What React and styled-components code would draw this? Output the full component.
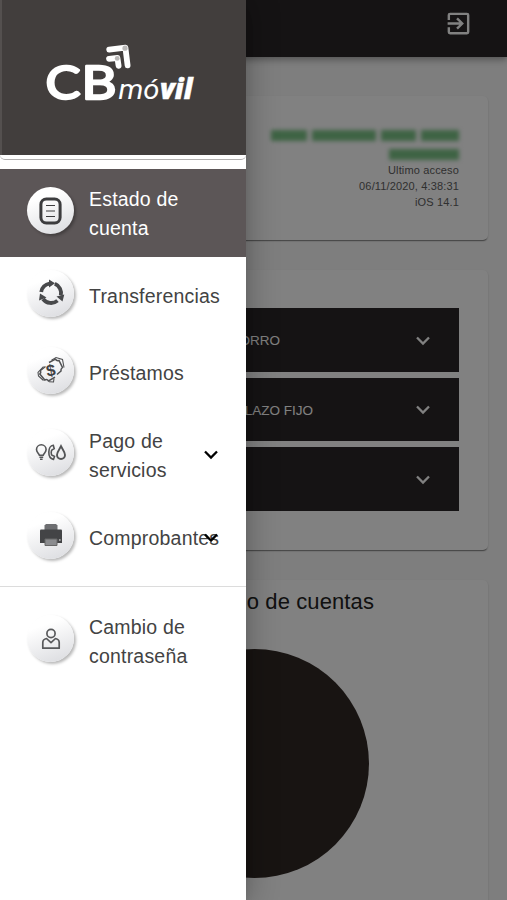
import React from "react";
import styled, { createGlobalStyle } from "styled-components";

const GlobalStyle = createGlobalStyle`
    * {
        box-sizing: border-box;
    }

    body {
        margin: 0;
        background: #fafafa;
        font-family: "Liberation Sans", Arial, sans-serif;
        overflow: hidden;
    }
`;

const Screen = styled.div`
    position: relative;
    height: 900px;
    overflow: hidden;
    background: #fafafa;
`;

const AppBar = styled.header`
    display: flex;
    align-items: center;
    justify-content: flex-end;
    height: 57px;
    padding: 0 34px 11px 0;
    background: #2b2728;
    box-shadow: 0 2px 5px rgba(0, 0, 0, .2), 0 5px 7px rgba(0, 0, 0, .14);
`;

const Page = styled.main`
    display: flex;
    flex-direction: column;
    gap: 30px;
    padding: 39px 19px 0;
`;

const Card = styled.section`
    height: ${props => props.$height}px;
    padding: ${props => props.$padding || "38.4px 29px"};
    border-radius: 5px;
    background: #fff;
    box-shadow: 0 2px 1px -1px rgba(0, 0, 0, .35), 0 1px 2px rgba(0, 0, 0, .2);
`;

const Owner = styled.div`
    display: flex;
    justify-content: flex-end;
    gap: 5px;
    height: 11px;
    margin-top: ${props => (props.$second ? 8 : 0)}px;
    filter: blur(2px);
`;

const Redacted = styled.span`
    width: ${props => props.$width}px;
    background: #7cc487;
`;

const Access = styled.div`
    padding-top: 2px;
    color: #606060;
    font-size: 11px;
    letter-spacing: .15px;
    line-height: 16px;
    text-align: right;
`;

const Accordions = styled.div`
    display: flex;
    flex-direction: column;
    gap: 6px;
`;

const Accordion = styled.div`
    display: flex;
    align-items: center;
    justify-content: space-between;
    height: 63.5px;
    padding: 1px 29px 0 0;
    background: #2b2728;
    color: #fff;
    font-size: 13.5px;
`;

const AccordionLabel = styled.span`
    width: ${props => props.$width}px;
    text-align: right;
    white-space: nowrap;
`;

const ChartTitle = styled.h2`
    width: 326px;
    margin: 0;
    font-size: 22px;
    font-weight: 400;
    line-height: 26px;
    letter-spacing: .1px;
    text-align: right;
    color: #222;
`;

const Pie = styled.div`
    width: 229px;
    height: 229px;
    margin: 34px 0 0 92px;
    border-radius: 50%;
    background: #312925;
`;

const Backdrop = styled.div`
    position: absolute;
    inset: 0;
    background: rgba(0, 0, 0, .495);
`;

const Drawer = styled.aside`
    position: absolute;
    top: 0;
    bottom: 0;
    left: 0;
    width: 245.5px;
    background: #fff;
    box-shadow: 0 10px 12px -6px rgba(0, 0, 0, .2), 0 0 29px 2px rgba(0, 0, 0, .28);
`;

const Brand = styled.div`
    height: 160px;
    border-bottom: 1.5px solid #b0aeae;
    border-radius: 0 0 5px 5px;
    overflow: hidden;
`;

const BrandPanel = styled.div`
    height: 155px;
    border-left: 2px solid #54504f;
    background: #423e3d;
`;

const Menu = styled.nav`
    padding-top: 9px;
`;

const Item = styled.a`
    display: flex;
    align-items: center;
    height: ${props => (props.$tall ? 88 : 77)}px;
    padding: 2px 27px 0;
    background: ${props => (props.$active ? "#5c5657" : "transparent")};
    color: ${props => (props.$active ? "#fff" : "#434343")};
    font-size: 19.5px;
    letter-spacing: .2px;
    line-height: 29.4px;
`;

const Badge = styled.span`
    display: flex;
    flex: none;
    align-items: center;
    justify-content: center;
    width: 47px;
    height: 47px;
    margin: 0 15px 7px 0;
    border-radius: 50%;
    background: linear-gradient(160deg, #fff 25%, #d9dade 100%);
    box-shadow: 2px 2px 3px rgba(0, 0, 0, .28);
`;

const ItemText = styled.span`
    flex: none;
    width: ${props => (props.$tall ? 104 : 115)}px;
`;

const ItemArrow = styled.span`
    display: flex;
    flex: none;
    margin: 0 0 2px ${props => (props.$tall ? 11 : 0)}px;
`;

const Divider = styled.hr`
    height: 1px;
    margin: 10px 0;
    border: 0;
    background: #dcdcdc;
`;

const Chevron = ({ color }) => (
    <svg width="14" height="10" viewBox="0 0 14 10" fill="none" stroke={color} strokeWidth="2.3">
        <path d="M1 1.5 7 7.5 13 1.5" />
    </svg>
);

const ExitIcon = () => (
    <svg width="29" height="29" viewBox="0 0 24 24" fill="#fff">
        <path d="M10.09 15.59 11.5 17l5-5-5-5-1.41 1.41L12.67 11H3v2h9.67l-2.58 2.59zM19 3H5a2 2 0 0 0-2 2v4h2V5h14v14H5v-4H3v4a2 2 0 0 0 2 2h14a2 2 0 0 0 2-2V5a2 2 0 0 0-2-2z" />
    </svg>
);

const Logo = () => (
    <svg width="243" height="155" viewBox="2 0 243 155">
        <g fill="#fff">
            <g fontFamily="Lato, sans-serif" fontSize="47" fontWeight="400" stroke="#fff" strokeWidth="2.4" strokeLinejoin="round">
                <text x="45.5" y="98.8" textLength="35" lengthAdjust="spacingAndGlyphs">C</text>
                <text x="81.5" y="98.8" textLength="35" lengthAdjust="spacingAndGlyphs">B</text>
            </g>
            <text x="118.5" y="98.5" fontFamily="Roboto, sans-serif" fontStyle="italic" fontSize="27" textLength="41" lengthAdjust="spacingAndGlyphs">mó</text>
            <text x="160" y="98.5" fontFamily="Open Sans, sans-serif" fontStyle="italic" fontWeight="800" fontSize="29" stroke="#fff" strokeWidth=".5" textLength="32.5" lengthAdjust="spacingAndGlyphs">vil</text>
        </g>
        <g fill="none" stroke="#fff" strokeWidth="5.8" strokeLinecap="round" strokeLinejoin="round">
            <path d="M109.2 49.6 125.4 47.6 127.6 65.3" />
            <path d="M109 58.8 117.4 58 118.6 65.8" />
        </g>
        <circle cx="125" cy="48.2" r="2.6" fill="#bbb9b8" />
        <circle cx="117.2" cy="58.4" r="2.4" fill="#bbb9b8" />
    </svg>
);

const StatementIcon = () => (
    <svg width="23" height="28" viewBox="0 0 23 28" fill="none" stroke="#3c3c3e">
        <rect x="1.9" y="1.9" width="19.2" height="24.2" rx="5.5" strokeWidth="3" />
        <path d="M7 8.5h9M7 14h9M7 19.5h9" strokeWidth="1.2" />
    </svg>
);

const TransferIcon = () => (
    <svg width="28" height="28" viewBox="0 0 28 28">
        <g fill="none" stroke="#48494b" strokeWidth="3.8">
            <path d="M4.2 13A10 10 0 0 1 12.5 4.6" />
            <path d="M17.8 4.8A10 10 0 0 1 23.8 16.5" />
            <path d="M20.5 21.6A10 10 0 0 1 6 20" />
        </g>
        <path d="M12 .5 18 4.3 12 8.5zM27.3 15.5 25.5 22.5 19.5 17.5zM2 21.5 3 14.5 9.5 18.5z" fill="#48494b" />
    </svg>
);

// two stacked banknotes, the front one open around the sign
const LoanIcon = () => (
    <svg width="28" height="28" viewBox="0 0 28 28" fill="none" stroke="#505153" strokeWidth="1.5">
        <path d="M12 6.5 18.5 3.2Q19.5 5.2 22 4.5L25.5 11.5Q23.5 13 24 15L20 18.5" />
        <path d="M8.5 10.5 3.5 14.5Q4.2 16.5 2.8 18L7.8 24Q10 22.8 11.5 25L18 21.2" />
        <path d="M14.5 4.2 19 1.5 25.5 3.5 27 11.5M6.5 10.5 1 16.5 1.5 20 6.5 24.5M12 25.8 16.5 26 17 22.5" strokeWidth="1.1" />
        <text x="9.2" y="20" fill="#404143" stroke="none" fontFamily="Liberation Sans, sans-serif" fontSize="16.5" fontWeight="700" transform="rotate(-10 14 14)">$</text>
    </svg>
);

const ServicesIcon = () => (
    <svg width="32" height="20" viewBox="0 0 32 20" fill="none" stroke="#535456" strokeWidth="1.6">
        <path d="M4.4 12.2C3.9 10.3 1.5 9.3 1.5 6.6a4.8 4.8 0 0 1 9.6 0c0 2.7-2.4 3.7-2.9 5.6zM4.4 14.3h3.8M5 16.3h2.6" />
        <path d="M18.3 2.3c-5.6.4-6.4 12.8.2 14.1l1-3-2.4-1.2c-1.2-.7-1.2-4.8.1-5.5l2-1z" />
        <path d="M26 3.2C24.7 6 22 8.8 22 12a4 4 0 0 0 8 0c0-3.2-2.7-6-4-8.8z" strokeWidth="1.9" />
    </svg>
);

const PrinterIcon = () => (
    <svg width="24" height="24" viewBox="0 0 24 24">
        <path d="M7 1h10l1.5 1.5V7h-13V2.5z" fill="#6d6e71" />
        <path d="M2 6.5h20q1 0 1 1V20H1V7.5q0-1 1-1z" fill="#434446" />
        <path d="M6 16h12v6.5H6z" fill="#8b8c8f" stroke="#666" />
        <circle cx="20.8" cy="17" r="1" fill="#aaa" />
    </svg>
);

const UserIcon = () => (
    <svg width="20" height="22" viewBox="0 0 20 22" fill="none" stroke="#58595b" strokeWidth="1.7">
        <circle cx="10" cy="5.5" r="4.1" />
        <path d="M5.5 10.5C3 11 1.8 12.3 1.8 14.5v5.7h16.4v-5.7c0-2.2-1.2-3.5-3.7-4L10 14.7z" strokeLinejoin="round" />
    </svg>
);

const MenuItem = ({
    icon, children, tall, active, arrow,
}) => (
    <Item $tall={tall} $active={active}>
        <Badge>{icon}</Badge>
        <ItemText $tall={tall}>{children}</ItemText>
        {arrow && (
            <ItemArrow $tall={tall}>
                <Chevron color="#000" />
            </ItemArrow>
        )}
    </Item>
);

export default () => (
    <Screen>
        <GlobalStyle />
        <AppBar>
            <ExitIcon />
        </AppBar>
        <Page>
            <Card $height={144} $padding="34px 29px 0">
                <Owner>
                    <Redacted $width={36} />
                    <Redacted $width={64} />
                    <Redacted $width={35} />
                    <Redacted $width={38} />
                </Owner>
                <Owner $second>
                    <Redacted $width={70} />
                </Owner>
                <Access>
                    <div>Ultimo acceso</div>
                    <div>06/11/2020, 4:38:31</div>
                    <div>iOS 14.1</div>
                </Access>
            </Card>
            <Card $height={280}>
                <Accordions>
                    <Accordion>
                        <AccordionLabel $width={232}>CAJA DE AHORRO</AccordionLabel>
                        <Chevron color="#fff" />
                    </Accordion>
                    <Accordion>
                        <AccordionLabel $width={265}>DEPÓSITO A PLAZO FIJO</AccordionLabel>
                        <Chevron color="#fff" />
                    </Accordion>
                    <Accordion>
                        <AccordionLabel $width={190} />
                        <Chevron color="#fff" />
                    </Accordion>
                </Accordions>
            </Card>
            <Card $height={340} $padding="9px 29px 0">
                <ChartTitle>Saldo de cuentas</ChartTitle>
                <Pie />
            </Card>
        </Page>
        <Backdrop />
        <Drawer>
            <Brand>
                <BrandPanel>
                    <Logo />
                </BrandPanel>
            </Brand>
            <Menu>
                <MenuItem icon={<StatementIcon />} tall active>Estado de cuenta</MenuItem>
                <MenuItem icon={<TransferIcon />}>Transferencias</MenuItem>
                <MenuItem icon={<LoanIcon />}>Préstamos</MenuItem>
                <MenuItem icon={<ServicesIcon />} tall arrow>Pago de servicios</MenuItem>
                <MenuItem icon={<PrinterIcon />} arrow>Comprobantes</MenuItem>
                <Divider />
                <MenuItem icon={<UserIcon />} tall>Cambio de contraseña</MenuItem>
            </Menu>
        </Drawer>
    </Screen>
);
